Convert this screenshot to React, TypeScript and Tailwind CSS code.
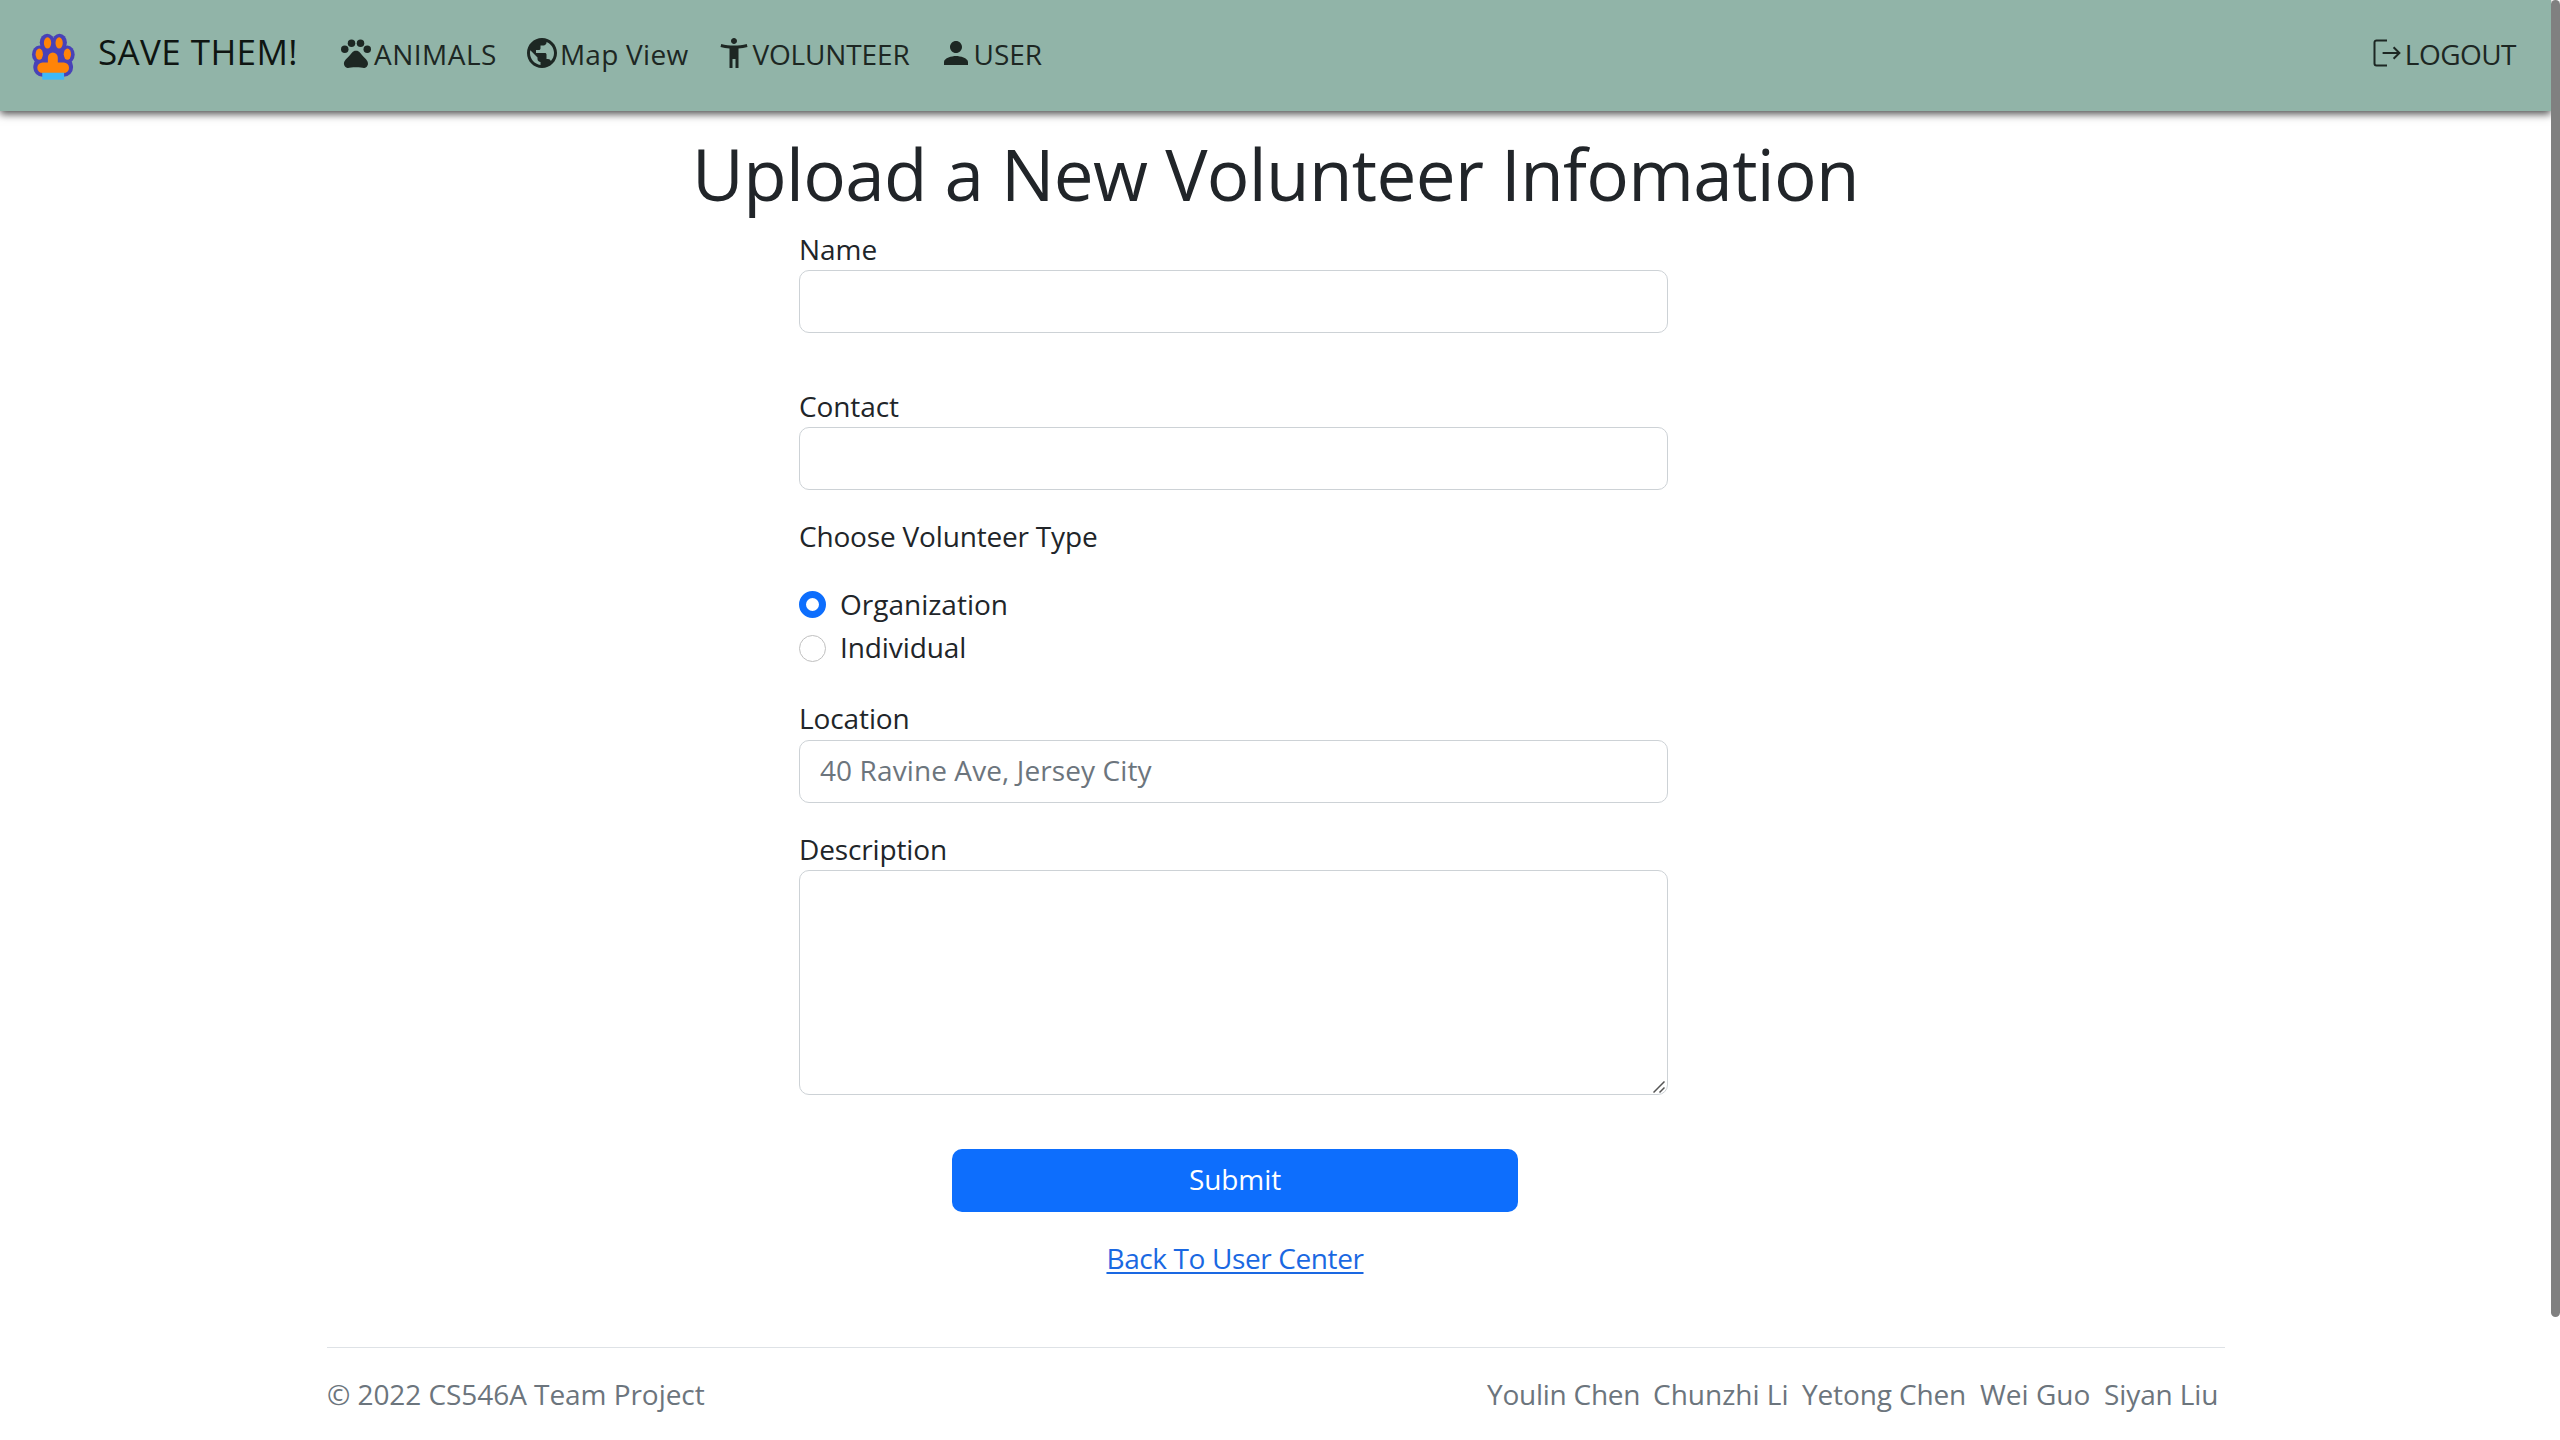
import React from "react";
import { MdAccessibilityNew, MdPerson, MdPets, MdPublic } from "react-icons/md";

function PawLogo() {
  return (
    <svg className="h-[47px] w-[45px] shrink-0" viewBox="36 40 134 142" aria-hidden="true">
      <g fill="#4842b7">
        <ellipse cx="84" cy="69" rx="22.500" ry="27" />
        <ellipse cx="121" cy="69" rx="22.500" ry="27" />
        <ellipse cx="60" cy="105" rx="22" ry="27" />
        <ellipse cx="145" cy="105" rx="22" ry="27" />
        <rect x="42" y="112" width="120" height="60" rx="28" />
        <rect x="68" y="75" width="70" height="70" />
      </g>
      <g fill="#ff8408">
        <ellipse cx="85" cy="70" rx="11" ry="17" />
        <ellipse cx="120" cy="70" rx="11" ry="17" />
        <ellipse cx="60" cy="104" rx="11" ry="17" />
        <ellipse cx="145" cy="104" rx="11" ry="17" />
        <rect x="54" y="129" width="96" height="32" rx="16" />
        <path d="M86 132V115a15 16 0 0 1 30 0v17z" />
      </g>
      <rect x="69" y="160" width="66" height="21" fill="#3fb9f8" />
    </svg>
  );
}

function LogoutIcon() {
  return (
    <svg
      className="size-9 shrink-0"
      viewBox="0 0 36 36"
      fill="none"
      stroke="currentColor"
      strokeWidth="2"
      aria-hidden="true"
    >
      <path d="M18 5.400H7.500a2 2 0 0 0-2 2v21a2 2 0 0 0 2 2H18" />
      <path d="M13.600 18H30.300M24.600 12.200l5.800 5.800-5.800 5.800" />
    </svg>
  );
}

const input =
  "block h-[63px] w-full rounded-[10px] border border-[#cdd2d6] bg-white px-[20px] pb-[3px] text-[28px] tracking-[0.100px] text-[#212529] outline-none placeholder:text-[#6c757d] placeholder:opacity-100";

function Label({ className, children }: { className: string; children: string }) {
  return <label className={"block h-[42px] " + className}>{children}</label>;
}

export default function App() {
  return (
    <div className="flex h-[1440px] w-[2560px] overflow-hidden bg-white font-['Open_Sans','Noto_Sans',sans-serif] text-[28px] leading-[42px] text-[#212529]">
      <div className="flex w-[2551px] flex-col">
        <nav className="flex h-[111px] shrink-0 items-start bg-[#91b4a8] pr-[35px] pl-[31px] text-[#1d2723] shadow-[0_3px_8px_rgba(0,0,0,0.7)]">
          <a className="mt-[30px] flex h-[50px] items-start text-[35px] leading-[44px] tracking-[0.395px] text-[#0f1512]">
            <span className="mt-[3px]">
              <PawLogo />
            </span>
            <span className="ml-[22px]">SAVE THEM!</span>
          </a>
          <div className="mt-[33px] ml-[40px] flex h-[42px] gap-[28px]">
            <a className="flex tracking-[0.500px]">
              <MdPets className="mt-[2px] size-9" />
              ANIMALS
            </a>
            <a className="-ml-px flex tracking-[0.267px]">
              <MdPublic className="mt-[2px] size-9" />
              Map View
            </a>
            <a className="flex tracking-[-0.140px]">
              <MdAccessibilityNew className="mt-[2px] size-9" />
              VOLUNTEER
            </a>
            <a className="flex">
              <MdPerson className="mt-[2px] size-9" />
              USER
            </a>
          </div>
          <a className="mt-[33px] ml-auto flex h-[42px] tracking-[-0.529px]">
            <span className="mt-[2px]">
              <LogoutIcon />
            </span>
            LOGOUT
          </a>
        </nav>

        <h1 className="mt-[15px] h-[95px] text-center text-[71px] leading-[96px] tracking-[-0.672px]">
          Upload a New Volunteer Infomation
        </h1>

        <form className="ml-[799px] flex w-[869px] flex-col pt-[7px]">
          <Label className="tracking-[-0.054px]">Name</Label>
          <input className={input} />
          <Label className="mt-[52px] tracking-[-0.100px]">Contact</Label>
          <input className={input} />
          <p className="mt-[25px] h-[42px] tracking-[-0.180px]">Choose Volunteer Type</p>
          <div className="mt-[26px] flex h-[43px] items-center">
            <span className="size-[27px] rounded-full border-[7px] border-[#0d6efd] bg-white" />
            <span className="ml-[14px] pb-[2px]">Organization</span>
          </div>
          <div className="flex h-[44px] items-center">
            <span className="size-[27px] rounded-full border border-[#bfbfbf] bg-white" />
            <span className="ml-[14px] pb-[2px] tracking-[-0.100px]">Individual</span>
          </div>
          <Label className="mt-[28px] leading-[40px] tracking-[-0.103px]">Location</Label>
          <input className={input} placeholder="40 Ravine Ave, Jersey City" />
          <Label className="mt-[25px] tracking-[-0.133px]">Description</Label>
          <div className="flex h-[225px] items-end justify-end rounded-[10px] border border-[#cdd2d6] pr-[2px] pb-px">
            <svg className="size-3" viewBox="0 0 12 12" stroke="#555" strokeWidth="1.500">
              <path d="M.5 11.500L11.500.5M6.500 11.500l5-5" />
            </svg>
          </div>
          <button
            type="button"
            className="mt-[54px] ml-[153px] h-[63px] w-[566px] rounded-[10px] bg-[#0d6efd] pb-[3px] text-center tracking-[-0.089px] text-white"
          >
            Submit
          </button>
          <a className="mt-[25px] ml-[153px] w-[566px] text-center tracking-[-0.390px] text-[#1a68e2] underline decoration-2 underline-offset-[3px]">
            Back To User Center
          </a>
        </form>

        <footer className="mt-[68px] ml-[327px] flex w-[1898px] justify-between border-t border-[#dee2e6] pt-[25px] pr-[6px] text-[#6c757d]">
          <p className="tracking-[-0.057px]">© 2022 CS546A Team Project</p>
          <ul className="flex">
            <li className="w-[166px] tracking-[-0.248px]">Youlin Chen</li>
            <li className="w-[149px]">Chunzhi Li</li>
            <li className="w-[178px] tracking-[-0.138px]">Yetong Chen</li>
            <li className="w-[124px]">Wei Guo</li>
            <li className="w-[115px] tracking-[-0.100px] whitespace-nowrap">Siyan Liu</li>
          </ul>
        </footer>
      </div>
      <div className="h-[1317px] w-[9px] rounded-[5px] bg-[#808080]" />
    </div>
  );
}
